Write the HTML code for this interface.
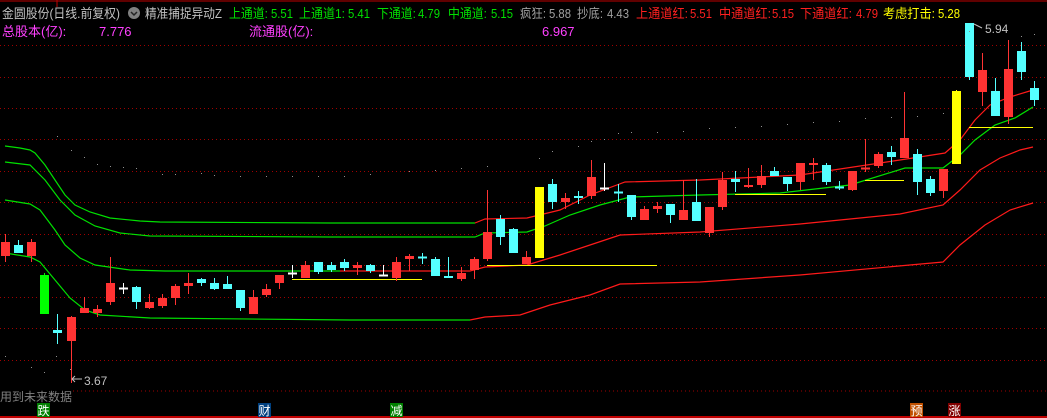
<!DOCTYPE html>
<html><head><meta charset="utf-8"><style>
html,body{margin:0;padding:0;background:#000;width:1047px;height:418px;overflow:hidden}
svg{position:absolute;left:0;top:0}
.t{font-family:"Liberation Sans","Noto Sans CJK SC",sans-serif;font-size:13px}
</style></head><body>
<svg id="s" width="1047" height="418" xmlns="http://www.w3.org/2000/svg">
<rect width="1047" height="418" fill="#000"/>
<line x1="0" y1="1" x2="1047" y2="1" stroke="#c00000" stroke-width="1"/>
<line x1="57" y1="0" x2="57" y2="7" stroke="#c00000"/>
<g id="grid" stroke="#a00000" stroke-dasharray="1,3"></g>
<line x1="73" y1="391" x2="1047" y2="391" stroke="#a00000" stroke-dasharray="1,3"/>
<line x1="0" y1="417" x2="1047" y2="417" stroke="#c00000" stroke-width="2"/>
<g id="lines" fill="none" stroke-width="1.2"></g>
<g id="hl"></g>
<g id="cs"></g>
<g class="t">
<text x="2" y="18" fill="#c0c0c0" textLength="118" lengthAdjust="spacingAndGlyphs">金圆股份(日线.前复权)</text>
<circle cx="134" cy="13" r="6" fill="#808080"/>
<path d="M131 12 l3 3 l3 -3" stroke="#222" stroke-width="1.5" fill="none"/>
<text x="145" y="18" fill="#c0c0c0" textLength="77" lengthAdjust="spacingAndGlyphs">精准捕捉异动Z</text>
<g fill="#00e000">
<text x="229" y="18" textLength="39" lengthAdjust="spacingAndGlyphs">上通道:</text><text x="271" y="18" textLength="22" lengthAdjust="spacingAndGlyphs">5.51</text>
<text x="299" y="18" textLength="46" lengthAdjust="spacingAndGlyphs">上通道1:</text><text x="348" y="18" textLength="22" lengthAdjust="spacingAndGlyphs">5.41</text>
<text x="377" y="18" textLength="39" lengthAdjust="spacingAndGlyphs">下通道:</text><text x="418" y="18" textLength="22" lengthAdjust="spacingAndGlyphs">4.79</text>
<text x="448" y="18" textLength="39" lengthAdjust="spacingAndGlyphs">中通道:</text><text x="491" y="18" textLength="22" lengthAdjust="spacingAndGlyphs">5.15</text>
</g>
<g fill="#a0a0a0">
<text x="520" y="18" textLength="26" lengthAdjust="spacingAndGlyphs">疯狂:</text><text x="549" y="18" textLength="22" lengthAdjust="spacingAndGlyphs">5.88</text>
<text x="577" y="18" textLength="26" lengthAdjust="spacingAndGlyphs">抄底:</text><text x="607" y="18" textLength="22" lengthAdjust="spacingAndGlyphs">4.43</text>
</g>
<g fill="#ff2020">
<text x="636" y="18" textLength="52" lengthAdjust="spacingAndGlyphs">上通道红:</text><text x="690" y="18" textLength="22" lengthAdjust="spacingAndGlyphs">5.51</text>
<text x="719" y="18" textLength="52" lengthAdjust="spacingAndGlyphs">中通道红:</text><text x="772" y="18" textLength="22" lengthAdjust="spacingAndGlyphs">5.15</text>
<text x="800" y="18" textLength="52" lengthAdjust="spacingAndGlyphs">下通道红:</text><text x="856" y="18" textLength="22" lengthAdjust="spacingAndGlyphs">4.79</text>
</g>
<g fill="#ffff00">
<text x="883" y="18" textLength="52" lengthAdjust="spacingAndGlyphs">考虑打击:</text><text x="938" y="18" textLength="22" lengthAdjust="spacingAndGlyphs">5.28</text>
</g>
<text x="2" y="36" fill="#ff40ff">总股本(亿):</text>
<text x="99" y="36" fill="#ff40ff">7.776</text>
<text x="249" y="36" fill="#ff40ff">流通股(亿):</text>
<text x="542" y="36" fill="#ff40ff">6.967</text>
<text x="985" y="33" fill="#c0c0c0" font-size="12">5.94</text>
<path d="M974 24 l8 4" stroke="#c0c0c0"/>
<text x="84" y="385" fill="#c0c0c0" font-size="12">3.67</text>
<path d="M72 379 h10 M72 379 l3 -3 M72 379 l3 3" stroke="#c0c0c0" fill="none"/>
<text x="0" y="401" fill="#808080" font-size="12">用到未来数据</text>
</g>
<g font-family="Liberation Sans,Noto Sans CJK SC,sans-serif" fill="#fff" font-size="12">
<rect x="37" y="403" width="13" height="14" fill="#008000"/><text x="37.5" y="415">跌</text>
<rect x="258" y="403" width="13" height="14" fill="#004080"/><text x="258.5" y="415">财</text>
<rect x="390" y="403" width="13" height="14" fill="#008000"/><text x="390.5" y="415">减</text>
<rect x="910" y="403" width="13" height="14" fill="#c05000"/><text x="910.5" y="415">预</text>
<rect x="948" y="403" width="13" height="14" fill="#800000"/><text x="948.5" y="415">涨</text>
</g>
</svg>
<script>
var NS="http://www.w3.org/2000/svg";
function el(p,n,a){var e=document.createElementNS(NS,n);for(var k in a)e.setAttribute(k,a[k]);p.appendChild(e);return e;}
var g=document.getElementById('grid');
[45,77,108,139,171,202,234,265,297,328,360].forEach(function(y){el(g,'line',{x1:0,y1:y+.5,x2:1047,y2:y+.5});});
var L=document.getElementById('lines');
function pl(pts,split,c1,c2){var a=[],b=[];pts.forEach(function(p){if(p[0]<=split)a.push(p);if(p[0]>=split)b.push(p);});
 var last=a[a.length-1];if(b.length&&b[0][0]>last[0])b.unshift(last);
 el(L,'polyline',{points:a.map(function(p){return p.join(',')}).join(' '),stroke:c1});
 if(b.length)el(L,'polyline',{points:b.map(function(p){return p.join(',')}).join(' '),stroke:c2});}
var G='#00e000',R='#ff1a1a';
pl([[5,146],[20,148],[30,150],[35,153],[45,165],[55,180],[65,195],[75,205],[90,212],[110,218],[140,221],[160,222],[330,223],[475,223],[485,219],[527,218],[560,210],[590,195],[625,182],[700,180],[800,175],[900,160],[945,153],[960,140],[975,120],[990,105],[1010,97],[1033,90]],478,G,R);
pl([[5,162],[30,165],[45,180],[60,200],[75,215],[95,226],[120,233],[150,236],[330,237],[475,237],[485,233],[527,232],[545,226],[570,215],[600,205],[630,197],[700,195],[780,193],[850,185],[905,168],[943,168],[960,155],[975,140],[995,125],[1015,118],[1033,107]],2000,G,G);
pl([[5,200],[30,204],[40,210],[55,230],[65,245],[80,258],[95,265],[130,270],[165,271],[340,271],[470,271],[485,267],[527,265],[560,255],[590,245],[620,235],[700,232],[800,224],[900,214],[943,205],[960,190],[980,170],[1000,158],[1020,150],[1033,147]],340,G,R);
pl([[5,253],[30,257],[40,262],[55,280],[70,298],[85,310],[100,315],[150,318],[350,320],[470,320],[485,317],[520,315],[550,305],[590,295],[620,284],[700,282],[800,275],[943,262],[960,245],[985,225],[1010,210],[1033,203]],470,G,R);
var H=document.getElementById('hl');
[[292,422,279],[487,657,265],[735,826,194],[865,904,180],[969,1033,127]].forEach(function(h){el(H,'line',{x1:h[0],y1:h[2]+.5,x2:h[1],y2:h[2]+.5,stroke:'#ffff00'});});
var C={r:'#ff3333',c:'#55ffff',g:'#00ff00',y:'#ffff00',w:'#ffffff'};
var cs=[[5,242,256,234,262,'r'],[18,245,253,240,253,'c'],[31,242,256,239,262,'r'],[44,275,314,273,314,'g'],[57,330,333,314,344,'c'],[71,317,341,316,383,'r'],[84,308,313,297,313,'r'],[97,309,313,305,317,'r'],[110,283,302,257,305,'r'],[123,288,288,283,294,'w'],[136,287,302,286,309,'c'],[149,302,308,294,309,'r'],[162,298,306,294,308,'r'],[175,286,298,284,305,'r'],[188,283,286,273,294,'r'],[201,279,283,278,286,'c'],[214,283,289,278,290,'c'],[227,284,289,276,289,'c'],[240,290,308,290,311,'c'],[253,297,314,290,314,'r'],[266,289,295,284,297,'r'],[279,275,283,275,289,'r'],[292,273,273,265,278,'w'],[305,265,278,261,278,'r'],[318,262,272,262,274,'c'],[331,265,270,262,272,'c'],[344,262,268,259,271,'c'],[357,265,268,262,275,'r'],[370,265,271,264,273,'c'],[383,275,275,265,275,'w'],[396,262,278,257,281,'r'],[409,256,259,254,271,'r'],[422,257,258,253,264,'c'],[435,259,276,257,276,'c'],[448,276,278,257,278,'c'],[461,273,279,267,281,'r'],[474,259,270,257,279,'r'],[487,232,259,190,261,'r'],[500,219,237,215,245,'c'],[513,229,253,228,253,'c'],[526,257,264,251,264,'r'],[539,187,258,187,258,'y'],[552,184,202,179,209,'c'],[565,198,202,193,209,'r'],[578,196,198,191,204,'c'],[591,177,196,160,199,'r'],[604,188,188,163,191,'w'],[618,192,192,184,202,'c'],[631,195,217,195,220,'c'],[644,209,220,206,220,'r'],[657,206,209,202,213,'r'],[670,204,215,204,223,'c'],[683,210,220,180,220,'r'],[696,202,221,179,221,'c'],[709,207,233,207,237,'r'],[722,180,207,172,210,'r'],[735,179,182,171,192,'c'],[748,185,187,168,188,'r'],[761,176,185,165,188,'r'],[774,171,176,167,176,'c'],[787,177,184,177,191,'c'],[800,163,182,163,190,'r'],[813,163,165,158,180,'r'],[826,165,182,163,185,'c'],[839,187,187,181,190,'c'],[852,171,190,171,191,'r'],[865,168,169,139,172,'r'],[878,154,166,152,168,'r'],[891,152,157,146,165,'c'],[904,138,158,92,158,'r'],[917,154,182,149,195,'c'],[930,179,193,176,196,'c'],[943,169,191,169,198,'r'],[956,91,164,90,164,'y'],[969,23,77,23,80,'c'],[982,70,92,53,106,'r'],[995,91,116,78,116,'c'],[1008,69,117,40,124,'r'],[1021,51,72,42,80,'c'],[1034,88,100,81,106,'c']];
var CS=document.getElementById('cs');
cs.forEach(function(k){var col=C[k[5]];
 el(CS,'line',{x1:k[0]+.5,y1:k[3],x2:k[0]+.5,y2:k[4],stroke:col});
 var h=k[2]-k[1];
 if(h<2){el(CS,'rect',{x:k[0]-4,y:k[1]-0.5,width:9,height:2,fill:col});}
 else el(CS,'rect',{x:k[0]-4,y:k[1],width:9,height:h,fill:col});
});
var dots=[[57,136],[71,150],[84,157],[97,164],[110,166],[123,167],[136,168],[162,174],[175,174],[201,173],[214,175],[240,176],[266,176],[292,176],[318,176],[344,176],[370,174],[409,171],[435,170],[461,168],[487,166],[539,158],[552,151],[578,146],[591,141],[604,139],[618,133],[631,132],[657,132],[683,131],[709,128],[735,127],[761,126],[787,124],[813,122],[839,121],[865,118],[891,117],[917,116],[943,113],[969,31],[1021,36],[1034,34],[70,369],[56,356],[44,372],[31,367],[5,356]];
dots.forEach(function(d){el(CS,'rect',{x:d[0],y:d[1],width:1,height:1,fill:'#909090'});});
</script>
</body></html>
